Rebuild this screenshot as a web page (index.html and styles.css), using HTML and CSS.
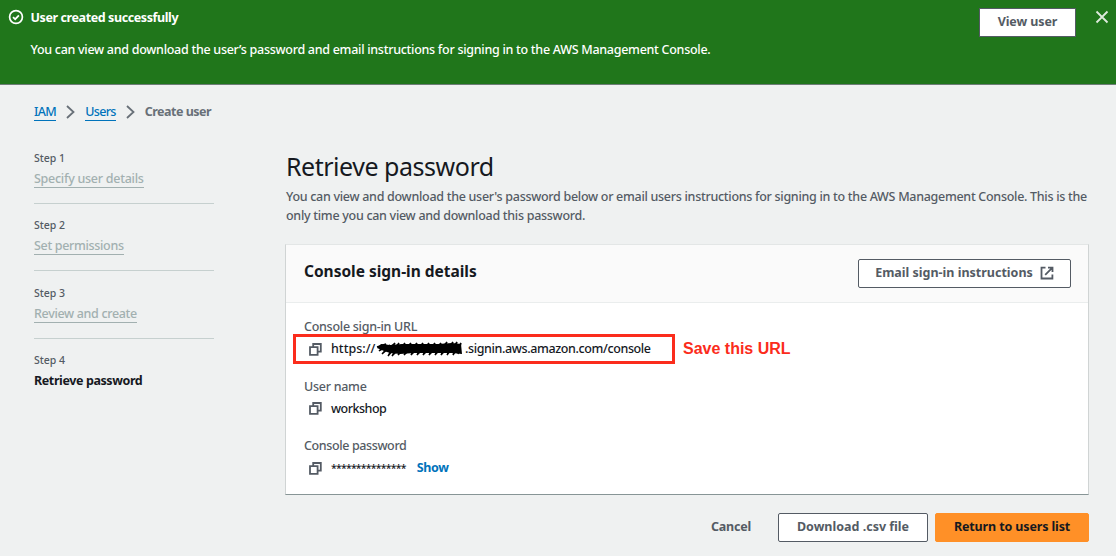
FILE: index.html
```html
<!DOCTYPE html>
<html lang="en">
<head>
<meta charset="utf-8">
<title>Create user</title>
<link rel="stylesheet" href="styles.css">
</head>
<body>
<header class="flash">
  <svg class="flash-icon" width="16" height="16" viewBox="0 0 16 16"><circle cx="8" cy="8" r="6.4"/><path d="M5 8.1l2.2 2.1 3.7-3.9"/></svg>
  <div class="flash-text">
    <div class="flash-title"><span class="t-title">User created successfully</span></div>
    <p class="flash-message"><span class="t-message">You can view and download the user’s password and email instructions for signing in to the AWS Management Console.</span></p>
  </div>
  <button class="btn view-btn"><span class="t-view">View user</span></button>
  <svg class="close" width="14" height="14" viewBox="0 0 14 14"><path d="M1.5 1.5l11 11M12.5 1.5l-11 11"/></svg>
</header>
<nav class="crumbs">
  <a class="crumb t-iam">IAM</a>
  <svg class="chevron" width="9" height="14" viewBox="0 0 9 14"><path d="M1 1l6.5 6L1 13"/></svg>
  <a class="crumb t-users">Users</a>
  <svg class="chevron" width="9" height="14" viewBox="0 0 9 14"><path d="M1 1l6.5 6L1 13"/></svg>
  <span class="crumb-current t-create">Create user</span>
</nav>
<div class="layout">
  <aside class="steps">
    <div class="step"><div class="step-no">Step 1</div><a class="step-link t-s1">Specify user details</a></div>
    <div class="step"><div class="step-no">Step 2</div><a class="step-link t-s2">Set permissions</a></div>
    <div class="step"><div class="step-no">Step 3</div><a class="step-link t-s3">Review and create</a></div>
    <div class="step"><div class="step-no">Step 4</div><span class="step-active t-s4">Retrieve password</span></div>
  </aside>
  <main class="content">
    <h1 class="heading"><span class="t-h1">Retrieve password</span></h1>
    <p class="desc"><span class="t-d1">You can view and download the user's password below or email users instructions for signing in to the AWS Management Console. This is the</span><br><span class="t-d2">only time you can view and download this password.</span></p>
    <section class="card">
      <div class="card-head">
        <h2 class="card-title"><span class="t-h2">Console sign-in details</span></h2>
        <button class="btn email-btn"><span class="t-email">Email sign-in instructions</span>
          <svg class="ext" width="14" height="14" viewBox="0 0 14 14"><path d="M5.5 1.6H1.5v10.9h10.9V8.5M8 1.6h4.5v4.5M12.2 1.9L5.2 8.9"/></svg>
        </button>
      </div>
      <div class="card-body">
        <div class="field">
          <div class="label"><span class="t-l1">Console sign-in URL</span></div>
          <div class="value">
            <svg class="copy" width="13" height="13" viewBox="0 0 13 13"><path d="M1 4.2h7.6v7.6H1zM4.2 4V1h7.6v7.6H8.8"/></svg>
            <span class="t-https">https://</span>
            <svg class="scribble" width="88" height="16" viewBox="0 0 88 16"><path class="blot" d="M1 7L5 3 14 4 26 3 38 3 50 3 62 3 76 2 85 3 86 13 76 12 64 12 50 12 38 12 24 13 14 12 8 10z"/><path d="M1 6l9-3-7 7 11-6-8 9 13-11-7 13L23 2l-7 13L29 2l-7 12L35 2l-7 12L41 2l-6 12L47 2l-6 12L53 2l-6 12L59 2l-6 12L65 2l-6 12L71 1l-6 13L77 1l-6 13L81 1l-4 13L85 2l-3 11"/></svg>
            <span class="t-rest">.signin.aws.amazon.com/console</span>
          </div>
          <div class="marker"></div>
          <div class="marker-note"><span class="t-save">Save this URL</span></div>
        </div>
        <div class="field">
          <div class="label"><span class="t-l2">User name</span></div>
          <div class="value">
            <svg class="copy" width="13" height="13" viewBox="0 0 13 13"><path d="M1 4.2h7.6v7.6H1zM4.2 4V1h7.6v7.6H8.8"/></svg>
            <span class="t-work">workshop</span>
          </div>
        </div>
        <div class="field">
          <div class="label"><span class="t-l3">Console password</span></div>
          <div class="value">
            <svg class="copy" width="13" height="13" viewBox="0 0 13 13"><path d="M1 4.2h7.6v7.6H1zM4.2 4V1h7.6v7.6H8.8"/></svg>
            <span class="t-stars">***************</span>
            <a class="show t-show">Show</a>
          </div>
        </div>
      </div>
    </section>
    <footer class="actions">
      <button class="btn cancel"><span class="t-cancel">Cancel</span></button>
      <button class="btn download"><span class="t-down">Download .csv file</span></button>
      <button class="btn primary"><span class="t-return">Return to users list</span></button>
    </footer>
  </main>
</div>
</body>
</html>
```
FILE: styles.css
```css
* { box-sizing: border-box; }
body { margin: 0; height: 556px; overflow: hidden; background: #eff1f1; font: 500 12.5px/18px "Noto Sans", sans-serif; letter-spacing: -.27px; color: #16191f; }
span, a { white-space: nowrap; }
svg { fill: none; flex: none; display: block; }
h1, h2, p { margin: 0; }
.flash { display: flex; height: 85px; background: #20761b; border-bottom: 1px solid #6d7d77; color: #fff; padding: 9px 7px 0 8px; }
.flash-icon { stroke: #fff; stroke-width: 1.7; }
.flash-text { flex: 1; padding-left: 6.5px; }
.flash-title { font-weight: 700; letter-spacing: -.4px; }
.flash-message { margin-top: 14px; letter-spacing: -.28px; }
.btn { display: flex; align-items: center; justify-content: center; height: 29px; padding: 0 0 1px; border: 1px solid #545b64; border-radius: 2px; background: #fff; color: #545b64; font: 700 12.5px/18px "Noto Sans", sans-serif; letter-spacing: 0; }
.view-btn { width: 97px; margin: -1px 19px 0 0; border-radius: 0; letter-spacing: -.1px; }
.close { stroke: #dfeadd; stroke-width: 1.8; margin-top: 1px; }
.crumbs { display: flex; align-items: center; height: 18px; margin: 18px 0 0 34px; }
.crumb { color: #0073bb; border-bottom: 1px solid #0073bb; line-height: 16px; letter-spacing: -.65px; }
.chevron { stroke: #687078; stroke-width: 1.8; margin: 0 10px; }
.crumb-current { font-weight: 700; color: #687078; letter-spacing: -.5px; }
.layout { display: flex; padding: 28px 0 0 34px; }
.steps { width: 180px; margin-right: 71px; }
.step { height: 55px; margin-bottom: 12.4px; border-bottom: 1px solid #c6d0cf; }
.step:last-child { border: 0; }
.step-no { font-size: 10.5px; line-height: 18px; color: #545b64; letter-spacing: 0; }
.step-link, .step-active { display: inline-block; line-height: 17px; margin-top: 3px; }
.step-link { color: #a2b0b0; border-bottom: 1px solid #a2b0b0; }
.t-s2, .t-s3 { letter-spacing: -.33px; }
.step-active { font-weight: 700; letter-spacing: -.4px; }
.content { width: 804px; }
.heading { font-weight: 400; font-size: 25px; line-height: 30px; margin: 2px 0 0 1px; letter-spacing: -.47px; }
.desc { color: #545b64; line-height: 19px; margin: 6px 0 0 1px; letter-spacing: -.29px; }
.card { margin-top: 19px; height: 251px; background: #fff; border: 1px solid #d0d4d4; border-top-color: #e3e6e6; border-bottom-color: #879596; }
.card-head { display: flex; justify-content: space-between; height: 58px; background: #fafafa; border-bottom: 1px solid #eaeded; padding: 14px 17px 0 18px; }
.card-title { font-size: 15.5px; line-height: 25px; letter-spacing: -.02px; }
.email-btn { width: 213px; gap: 7px; }
.ext { stroke: #545b64; stroke-width: 1.8; }
.card-body { padding: 15px 18px; }
.field { position: relative; height: 59.5px; }
.label { color: #545b64; }
.t-l3 { letter-spacing: -.38px; }
.value { display: flex; align-items: center; height: 18px; margin-top: 4px; padding-left: 5px; }
.copy { stroke: #545b64; stroke-width: 1.8; margin-right: 9px; }
.t-https { width: 46px; letter-spacing: 0; }
.scribble { stroke: #000; stroke-width: 1.4; margin: 0 1px 0 -1px; }
.blot { fill: #000; stroke: none; }
.t-rest { letter-spacing: -.38px; }
.t-work { letter-spacing: -.5px; }
.t-stars { font-size: 10.5px; letter-spacing: -.78px; }
.show { color: #0073bb; font-weight: 700; margin-left: 11px; letter-spacing: -.3px; }
.marker { position: absolute; left: -11px; top: 16px; width: 382px; height: 30px; border: 3px solid #fb2c1c; }
.marker-note { position: absolute; left: 379px; top: 22px; font: 700 16px/18px "Liberation Sans", sans-serif; color: #fb2c1c; letter-spacing: 0; }
.actions { display: flex; justify-content: flex-end; margin-top: 18px; }
.cancel { border-color: transparent; background: none; margin-right: 26px; letter-spacing: -.2px; }
.download { width: 150px; margin-right: 7px; }
.primary { width: 154px; background: #ff9027; border-color: #ff9027; color: #16191f; letter-spacing: -.13px; }
```
